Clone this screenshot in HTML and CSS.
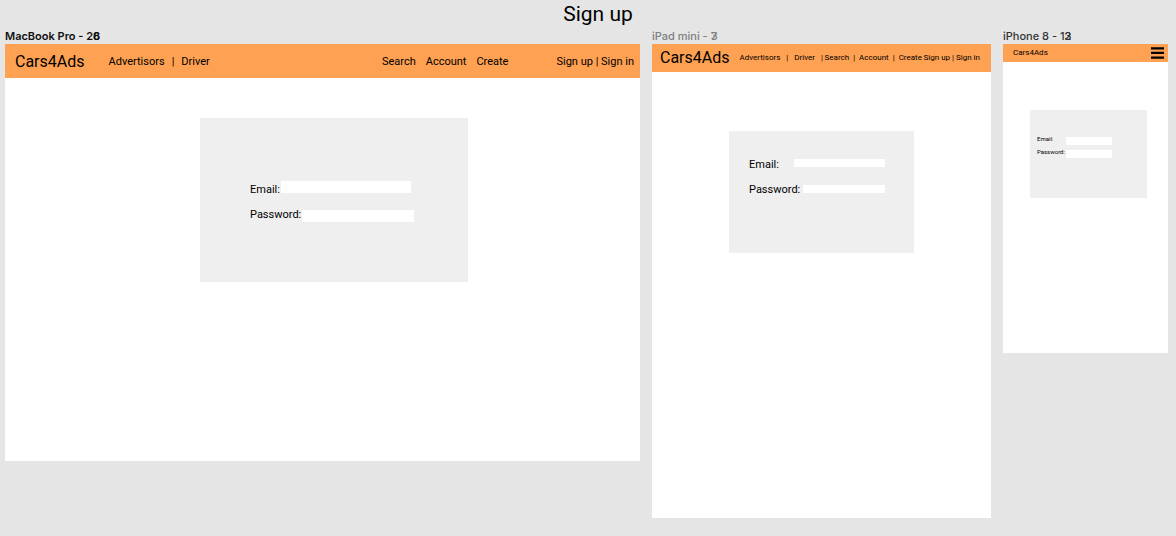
FILE: index.html
```html
<!DOCTYPE html>
<html lang="en">
<head>
<meta charset="utf-8">
<title>Sign up</title>
<link rel="stylesheet" href="styles.css">
</head>
<body>
<h1 class="title">Sign up</h1>
<main class="boards">
  <section class="board laptop">
    <h2 class="board-name strong">MacBook Pro - 2<span class="digit">6<span class="over">8</span></span></h2>
    <div class="screen">
      <header class="bar">
        <a class="brand" href="#">Cars4Ads</a>
        <nav class="group roles"><a href="#">Advertisors</a><span>|</span><a href="#">Driver</a></nav>
        <nav class="group tools"><a href="#">Search</a><a href="#">Account</a><a href="#">Create</a></nav>
        <nav class="account"><a href="#">Sign up</a> | <a href="#">Sign in</a></nav>
      </header>
      <div class="content">
        <form class="card">
          <div class="row"><label for="l-email">Email:</label><input class="email" id="l-email" type="email"></div>
          <div class="row"><label for="l-pass">Password:</label><input class="pass" id="l-pass" type="password"></div>
        </form>
      </div>
    </div>
  </section>
  <section class="board tablet">
    <h2 class="board-name muted">iPad mini - <span class="digit">3<span class="over">7</span></span></h2>
    <div class="screen">
      <header class="bar">
        <a class="brand" href="#">Cars4Ads</a>
        <nav class="group roles"><a href="#">Advertisors</a><span>|</span><a href="#">Driver</a><span>|</span></nav>
        <nav class="group tools"><a href="#">Search</a><span>|</span><a href="#">Account</a><span>|</span><a href="#">Create</a></nav>
        <nav class="account"><a href="#">Sign up</a> | <a href="#">Sign in</a></nav>
      </header>
      <div class="content">
        <form class="card">
          <div class="row"><label for="t-email">Email:</label><input class="email" id="t-email" type="email"></div>
          <div class="row"><label for="t-pass">Password:</label><input class="pass" id="t-pass" type="password"></div>
        </form>
      </div>
    </div>
  </section>
  <section class="board phone">
    <h2 class="board-name">iPhone 8 - 1<span class="digit">2<span class="over">3</span></span></h2>
    <div class="screen">
      <header class="bar">
        <a class="brand" href="#">Cars4Ads</a>
        <button class="menu" type="button" aria-label="Menu"><svg width="13" height="12" viewBox="0 0 13 12"><path d="M0 0.3h13v2.3H0zM0 4.8h13v2.3H0zM0 9.4h13v2.3H0z"/></svg></button>
      </header>
      <div class="content">
        <form class="card">
          <div class="row"><label for="p-email">Email:</label><input class="email" id="p-email" type="email"></div>
          <div class="row"><label for="p-pass">Password:</label><input class="pass" id="p-pass" type="password"></div>
        </form>
      </div>
    </div>
  </section>
</main>
</body>
</html>
```
FILE: styles.css
```css
* { box-sizing: border-box; }
body {
  margin: 0;
  background: #e5e5e5;
  color: #000;
  font: 11px/16px Roboto, sans-serif;
}
a { color: inherit; text-decoration: none; }
.title {
  margin: 0;
  padding-left: 20px;
  font-size: 21px;
  font-weight: 400;
  line-height: 28px;
  text-align: center;
}
.boards {
  display: flex;
  align-items: flex-start;
  gap: 12px;
  padding: 0 8px 0 5px;
}
.board { min-width: 0; }
.laptop { flex: 635 1 0; }
.tablet { flex: 339 1 0; }
.phone { flex: 165 1 0; }
.board-name {
  margin: 0;
  color: #333;
  font: 500 11px/16px Inter, sans-serif;
  white-space: nowrap;
}
.strong { color: #111; font-weight: 600; }
.muted { color: #808080; }
.digit { position: relative; }
.over { position: absolute; left: 0; top: 0; line-height: normal; }
.screen { background: #fff; }
.laptop .screen { aspect-ratio: 635 / 417; }
.tablet .screen { aspect-ratio: 339 / 474; }
.phone .screen { aspect-ratio: 165 / 309; }

.bar {
  display: flex;
  align-items: center;
  background: #ffa152;
  white-space: nowrap;
}
.laptop .bar { padding: 10px 6px 8px 10px; }
.tablet .bar { padding: 6px 11px 6px 8px; font-size: 8px; }
.phone .bar { justify-content: space-between; padding: 1px 4px 1px 10px; }
.brand { font-size: 16px; }
.phone .brand { font-size: 8px; }
.group { display: flex; }
.laptop .roles { gap: 7px; margin: 0 auto 0 24px; }
.laptop .tools { gap: 10px; margin-right: 48px; }
.tablet .roles { gap: 6px; margin-left: 10px; }
.tablet .tools { gap: 4px; margin: 0 auto; }
.menu {
  display: flex;
  padding: 0;
  border: 0;
  background: none;
}

.content { display: grid; }
.laptop .content { grid-template-columns: 195fr 268fr 172fr; padding-top: 40px; }
.tablet .content { grid-template-columns: 77fr 185fr 77fr; padding-top: 59px; }
.phone .content { grid-template-columns: 27fr 117fr 21fr; padding-top: 48px; }
.card {
  grid-column: 2;
  display: flex;
  flex-direction: column;
  background: #efefef;
}
.laptop .card { gap: 9px; padding: 63px 50px 60px; }
.tablet .card { gap: 9px; padding: 25px 29px 56px 20px; }
.phone .card { gap: 3px; padding: 25px 35px 40px 7px; }
.row { display: flex; }
.row input {
  min-width: 0;
  padding: 0 2px;
  border: 0;
  background: #fff;
  font: inherit;
}
.laptop .row { gap: 1px; align-items: flex-end; }
.laptop .row:first-child { align-items: flex-start; }
.laptop label, .tablet label { line-height: 18px; margin-bottom: -2px; }
.laptop input { height: 12px; }
.laptop .email { width: 130px; }
.laptop .pass { width: 112px; }
.tablet .row { justify-content: space-between; align-items: flex-start; }
.tablet input { height: 8px; margin-top: 3px; }
.tablet .email { width: 91px; }
.tablet .pass { width: 82px; margin-top: 4px; }
.phone .row { height: 10px; justify-content: space-between; font-size: 6px; line-height: 8px; }
.phone input { width: 46px; height: 8px; align-self: flex-end; }
```
